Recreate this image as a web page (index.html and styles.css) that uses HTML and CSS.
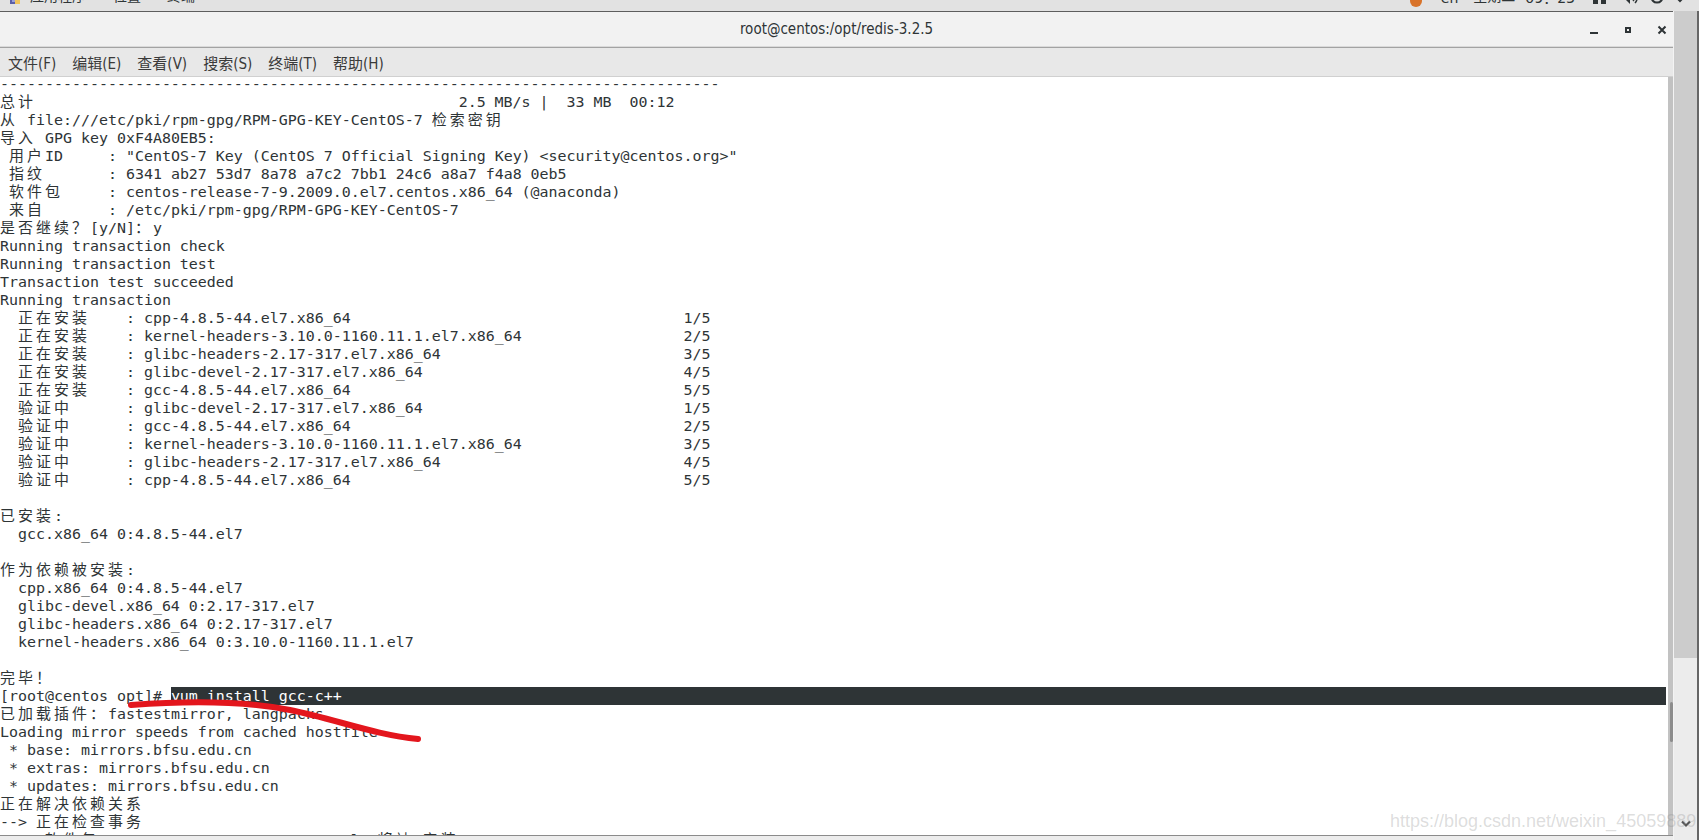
FILE: index.html
```html
<!DOCTYPE html>
<html lang="zh-CN">
<head>
  <meta charset="UTF-8" />
  <title>root@centos:/opt/redis-3.2.5</title>
  <link rel="stylesheet" href="styles.css">
</head>
<body>

  <!-- GNOME top panel (cut off at the top of the capture) -->
  <div class="topbar">
    <div class="tb-left">
      <svg class="apps-icon" width="10" height="14" viewBox="0 0 10 14">
        <rect x="0" y="4" width="5" height="10" fill="#5b5fa8"/>
        <rect x="5" y="6" width="5" height="8" fill="#f0c45c"/>
        <rect x="2" y="9" width="3" height="3" fill="#9aa0d8"/>
      </svg>
      <span class="tb-item apps">应用程序</span>
      <span class="tb-item places">位置</span>
      <span class="tb-item term-item">终端</span>
    </div>
    <div class="tb-right">
      <span class="tb-dot"></span>
      <span class="tb-item tb-en">en</span>
      <span class="tb-item tb-day">星期二</span>
      <span class="tb-item tb-time">09：23</span>
      <svg class="tb-icon tb-net" width="16" height="16" viewBox="0 0 16 16">
        <rect x="1" y="2" width="5" height="14" fill="#2e3436"/>
        <rect x="9" y="2" width="5" height="14" fill="#2e3436"/>
      </svg>
      <svg class="tb-icon tb-vol" width="16" height="16" viewBox="0 0 16 16">
        <path d="M1 6h3l4-4v14l-4-4H1z" fill="#2e3436"/>
        <path d="M11 5c2 2 2 6 0 8M13 3c3 3 3 9 0 12" stroke="#2e3436" stroke-width="1.5" fill="none"/>
      </svg>
      <svg class="tb-icon tb-pow" width="14" height="16" viewBox="0 0 14 16">
        <path d="M4 4.5a5.5 5.5 0 1 0 6 0" stroke="#2e3436" stroke-width="2" fill="none"/>
        <path d="M7 1v7" stroke="#2e3436" stroke-width="2"/>
      </svg>
      <svg class="tb-icon tb-arrow" width="10" height="16" viewBox="0 0 10 16">
        <path d="M1 9l4 4 4-4" stroke="#2e3436" stroke-width="2" fill="none"/>
      </svg>
    </div>
  </div>

  <div class="desk">

    <div class="win">
      <div class="titlebar">
        <div class="title">root@centos:/opt/redis-3.2.5</div>
        <div class="win-btns">
          <svg viewBox="0 0 16 16"><rect x="4" y="11" width="8" height="2" fill="#2e3436"/></svg>
          <svg viewBox="0 0 16 16"><rect x="6" y="7" width="4" height="4" fill="none" stroke="#2e3436" stroke-width="2"/></svg>
          <svg viewBox="0 0 16 16"><path d="M4.5 5.5l7 7M11.5 5.5l-7 7" stroke="#2e3436" stroke-width="2"/></svg>
        </div>
      </div>

      <div class="menubar">
        <span>文件(F)</span>
        <span>编辑(E)</span>
        <span>查看(V)</span>
        <span>搜索(S)</span>
        <span>终端(T)</span>
        <span>帮助(H)</span>
      </div>

      <div class="term">
        <div class="screen">
<pre class="out first">--------------------------------------------------------------------------------
<span class="col51"><span class="z">总计</span></span>2.5 MB/s |  33 MB  00:12
<span class="z">从</span> file:///etc/pki/rpm-gpg/RPM-GPG-KEY-CentOS-7 <span class="z">检索密钥</span>
<span class="z">导入</span> GPG key 0xF4A80EB5:
 <span class="z">用户</span>ID     : "CentOS-7 Key (CentOS 7 Official Signing Key) &lt;security@centos.org&gt;"
 <span class="z">指纹</span>       : 6341 ab27 53d7 8a78 a7c2 7bb1 24c6 a8a7 f4a8 0eb5
 <span class="z">软件包</span>     : centos-release-7-9.2009.0.el7.centos.x86_64 (@anaconda)
 <span class="z">来自</span>       : /etc/pki/rpm-gpg/RPM-GPG-KEY-CentOS-7
<span class="z">是否继续？</span>[y/N]<span class="z">：</span>y
Running transaction check
Running transaction test
Transaction test succeeded
Running transaction
<span class="col76">  <span class="z">正在安装</span>    : cpp-4.8.5-44.el7.x86_64</span>1/5
<span class="col76">  <span class="z">正在安装</span>    : kernel-headers-3.10.0-1160.11.1.el7.x86_64</span>2/5
<span class="col76">  <span class="z">正在安装</span>    : glibc-headers-2.17-317.el7.x86_64</span>3/5
<span class="col76">  <span class="z">正在安装</span>    : glibc-devel-2.17-317.el7.x86_64</span>4/5
<span class="col76">  <span class="z">正在安装</span>    : gcc-4.8.5-44.el7.x86_64</span>5/5
<span class="col76">  <span class="z">验证中</span>      : glibc-devel-2.17-317.el7.x86_64</span>1/5
<span class="col76">  <span class="z">验证中</span>      : gcc-4.8.5-44.el7.x86_64</span>2/5
<span class="col76">  <span class="z">验证中</span>      : kernel-headers-3.10.0-1160.11.1.el7.x86_64</span>3/5
<span class="col76">  <span class="z">验证中</span>      : glibc-headers-2.17-317.el7.x86_64</span>4/5
<span class="col76">  <span class="z">验证中</span>      : cpp-4.8.5-44.el7.x86_64</span>5/5

<span class="z">已安装</span>:
  gcc.x86_64 0:4.8.5-44.el7

<span class="z">作为依赖被安装</span>:
  cpp.x86_64 0:4.8.5-44.el7
  glibc-devel.x86_64 0:2.17-317.el7
  glibc-headers.x86_64 0:2.17-317.el7
  kernel-headers.x86_64 0:3.10.0-1160.11.1.el7

<span class="z">完毕！</span></pre>
          <div class="cmd"><span>[root@centos opt]# </span><span class="sel">yum install gcc-c++</span></div>
<pre class="out"><span class="z">已加载插件：</span>fastestmirror, langpacks
Loading mirror speeds from cached hostfile
 * base: mirrors.bfsu.edu.cn
 * extras: mirrors.bfsu.edu.cn
 * updates: mirrors.bfsu.edu.cn
<span class="z">正在解决依赖关系</span>
--&gt; <span class="z">正在检查事务</span>
---&gt; <span class="z">软件包</span> gcc-c++.x86_64.0.4.8.5-44.el7 <span class="z">将被</span> <span class="z">安装</span></pre>
        </div>
        <div class="sb">
          <div class="thumb"></div>
        </div>
      </div>

      <div class="win-foot"></div>
    </div>

    <div class="strip">
      <div class="strip-top"></div>
      <div class="strip-bot">
        <svg width="10" height="8" viewBox="0 0 10 8">
          <path d="M1 1.5l4 4 4-4" stroke="#555" stroke-width="2.2" fill="none"/>
        </svg>
      </div>
    </div>

  </div>

  <!-- red pen mark drawn over the screenshot -->
  <svg class="mark" width="1699" height="840" viewBox="0 0 1699 840">
    <path d="M131 705 C185 701 245 701 290 710 C335 719 375 735 418 739" stroke="#e3161d" stroke-width="6" stroke-linecap="round" fill="none"/>
  </svg>

  <div class="watermark">https://blog.csdn.net/weixin_45059889</div>

</body>
</html>
```

FILE: styles.css
```css
body {
  margin: 0;
  width: 1699px;
  height: 840px;
  overflow: hidden;
  position: relative;
  background-color: #ececec;
  font-family: "DejaVu Sans", "Noto Sans CJK SC", sans-serif;
  color: #2e3436;
}

/* top panel */
.topbar {
  height: 11px;
  background-color: #e2e2e2;
  display: flex;
  justify-content: space-between;
  align-items: flex-end;
  overflow: hidden;
  font-size: 14px;
  line-height: 14px;
}

.tb-left,
.tb-right {
  display: flex;
  align-items: flex-end;
}

.tb-left {
  padding-left: 10px;
}

.tb-right {
  padding-right: 14px;
}

.apps-icon {
  display: block;
  margin-bottom: 7px;
}

.tb-item {
  margin-bottom: 8px;
  white-space: nowrap;
}

.apps {
  margin-left: 10px;
}

.places {
  margin-left: 27px;
}

.term-item {
  margin-left: 26px;
}

.tb-dot {
  width: 12px;
  height: 12px;
  border-radius: 50%;
  background-color: #d8732a;
  margin-bottom: 4px;
}

.tb-en {
  margin-left: 19px;
  margin-bottom: 6px;
}

.tb-day {
  margin-left: 15px;
}

.tb-time {
  margin-left: 10px;
  margin-bottom: 6px;
}

.tb-icon {
  display: block;
  margin-bottom: 7px;
}

.tb-net {
  margin-left: 17px;
}

.tb-vol {
  margin-left: 14px;
}

.tb-pow {
  margin-left: 12px;
}

.tb-arrow {
  margin-left: 11px;
}

/* desktop row: terminal window + the strip on the right */
.desk {
  display: flex;
  height: 829px;
}

.win {
  width: 1673px;
  display: flex;
  flex-direction: column;
  border-top: 1px solid #5e5e5e;
}

.titlebar {
  height: 34px;
  background-color: #f2f2f2;
  border-bottom: 1px solid #dadada;
  display: grid;
  grid-template-columns: 1fr auto 1fr;
  align-items: center;
}

.title {
  grid-column: 2;
  font-family: "DejaVu Sans Condensed", "DejaVu Sans", sans-serif;
  font-stretch: condensed;
  font-size: 15px;
}

.win-btns {
  justify-self: end;
  display: flex;
  gap: 18px;
  padding-right: 3px;
}

.win-btns svg {
  display: block;
  width: 16px;
  height: 16px;
}

.menubar {
  height: 28px;
  background-color: #e8e8e8;
  border-top: 1px solid #a3a3a3;
  border-bottom: 1px solid #d0d0d0;
  display: flex;
  align-items: center;
  gap: 16px;
  padding-left: 8px;
  font-family: "DejaVu Sans Condensed", "DejaVu Sans", "Noto Sans CJK SC", sans-serif;
  font-stretch: condensed;
  font-size: 15px;
  color: #3a3a3a;
}

/* terminal */
.term {
  height: 758px;
  display: flex;
  background-color: #fff;
  border-bottom: 1px solid #8b8b8b;
}

.screen {
  flex: 1;
  overflow: hidden;
  padding-right: 2px;
  font: 14.95px/18px "DejaVu Sans Mono", "Noto Sans CJK SC", monospace;
  color: #2e3436;
}

.out {
  margin: 0;
  font: inherit;
}

.out.first {
  margin-top: -2px;
}

.z {
  letter-spacing: 3.05px;
}

.col51 {
  display: inline-block;
  width: 51ch;
}

.col76 {
  display: inline-block;
  width: 76ch;
}

.cmd {
  display: flex;
  white-space: pre;
}

.sel {
  flex: 1;
  background-color: #2e3436;
  color: #fff;
}

.sb {
  width: 5px;
  background-color: #c2c2c2;
  display: flex;
  flex-direction: column;
  align-items: flex-end;
  padding-top: 625px;
  box-sizing: border-box;
}

.thumb {
  width: 3px;
  height: 40px;
  background-color: #8c8c8c;
  border-radius: 2px;
}

.win-foot {
  flex: 1;
  background-color: #ececec;
}

.strip {
  flex: 1;
  display: flex;
  flex-direction: column;
  border-left: 1px solid #f3f3f3;
  border-right: 2px solid #666;
}

.strip-top {
  height: 647px;
  background-color: #cccccc;
}

.strip-bot {
  flex: 1;
  display: flex;
  justify-content: center;
  align-items: flex-end;
  padding-bottom: 12px;
}

.mark {
  position: absolute;
  left: 0;
  top: 0;
  pointer-events: none;
}

.watermark {
  position: absolute;
  left: 1390px;
  top: 811px;
  font: 18px/20px "Liberation Sans", Arial, sans-serif;
  color: rgba(140, 140, 140, 0.3);
  white-space: nowrap;
}
```
